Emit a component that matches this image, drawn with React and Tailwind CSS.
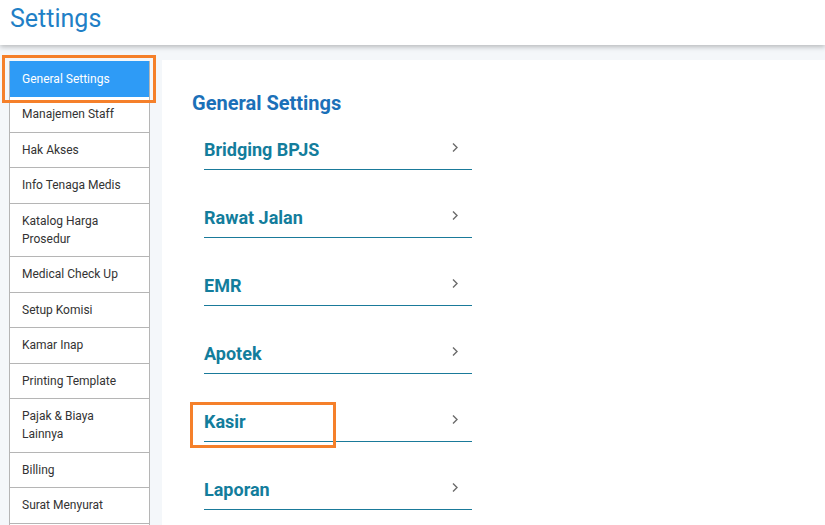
import React from 'react';

const MENU = [
  'Manajemen Staff',
  'Hak Akses',
  'Info Tenaga Medis',
  'Katalog Harga Prosedur',
  'Medical Check Up',
  'Setup Komisi',
  'Kamar Inap',
  'Printing Template',
  'Pajak & Biaya Lainnya',
  'Billing',
  'Surat Menyurat',
];

const SECTIONS = ['Bridging BPJS', 'Rawat Jalan', 'EMR', 'Apotek', 'Kasir', 'Laporan'];

function Chevron() {
  return (
    <svg width="8" height="11" viewBox="0 0 8 11" className="mr-[13px] mb-[9px]">
      <polyline points="2,1.5 6,5.5 2,9.5" fill="none" stroke="#6b6b6b" strokeWidth="1.4" />
    </svg>
  );
}

export default function App() {
  return (
    <div className="min-h-screen bg-[#f4f7fa] font-['Roboto',sans-serif] overflow-hidden h-[525px]">
      <header className="h-[45px] bg-white shadow-[0_2px_5px_rgba(0,0,0,0.25)] relative z-10">
        <h1 className="pl-[10px] text-[25px] leading-[38px] text-[#217fc6]">Settings</h1>
      </header>

      <div className="flex pt-[15px]">
        <aside className="ml-[9px] w-[141px] shrink-0 pt-[1px]">
          <div className="border-x border-[#b5b5b5] h-[470px] bg-white">
            <div className="relative">
              <div className="h-[36px] bg-[#2e9bf6] pl-[12px] flex items-center text-[12px] text-white">
                General Settings
              </div>
              <div className="absolute -left-[8px] -right-[7px] -top-[6px] -bottom-[6px] border-[3px] border-[#f5802a]"></div>
            </div>
            {MENU.map((m) => (
              <div
                key={m}
                className="bg-white border-b border-[#b5b5b5] pl-[12px] pr-[24px] py-[8.25px] text-[12px] leading-[18px] text-[#333]"
              >
                {m}
              </div>
            ))}
          </div>
        </aside>

        <main className="ml-[12px] flex-1 bg-white min-h-[470px] pl-[30px] pt-[29px]">
          <h2 className="text-[20px] leading-[28px] font-bold text-[#1b70b8]">General Settings</h2>
          <div className="pl-[12px]">
            {SECTIONS.map((s, i) => (
              <div
                key={s}
                className={`relative w-[268px] flex items-end justify-between border-b-[1.5px] border-[#1a7a9a] pb-[7px] ${i === 0 ? 'mt-[21px]' : 'mt-[36px]'}`}
              >
                <span className="text-[18px] leading-[24px] font-bold text-[#137d9c]">{s}</span>
                <Chevron />
                {s === 'Kasir' && (
                  <div className="absolute -left-[14px] top-[-8px] w-[146px] h-[46px] border-[3px] border-[#f5802a]"></div>
                )}
              </div>
            ))}
          </div>
        </main>
      </div>
    </div>
  );
}
